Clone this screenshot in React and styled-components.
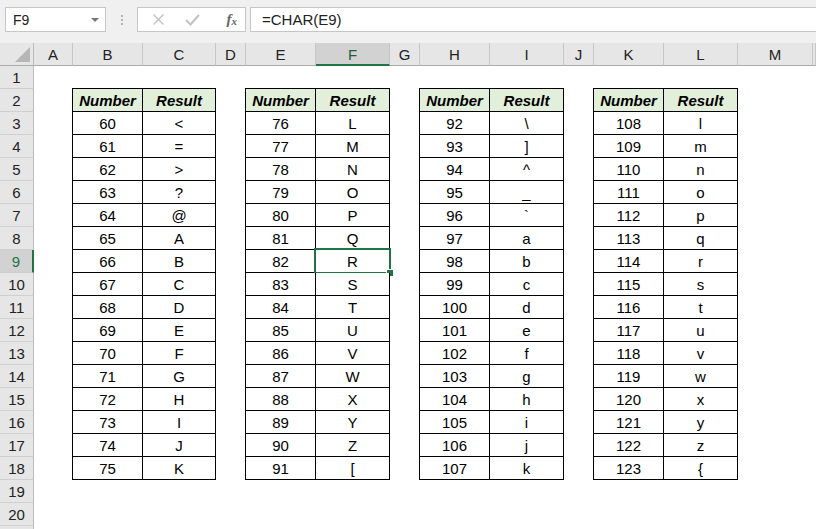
import React from 'react'
import styled, { createGlobalStyle } from 'styled-components'

const GlobalStyle = createGlobalStyle`
  html, body { margin: 0; padding: 0; background: #fff; }
  body { font-family: "Liberation Sans", Arial, sans-serif; overflow: hidden; }
`

const GREEN = '#217346'
const COLS = ['A', 'B', 'C', 'D', 'E', 'F', 'G', 'H', 'I', 'J', 'K', 'L', 'M', '']
const STARTS = [60, 76, 92, 108]
const ROWS = 20

const App = () => {
  return (
    <Page>
      <GlobalStyle />
      <FormulaBar>
        <NameBox>
          <span>F9</span>
          <Caret />
        </NameBox>
        <Dots>
          <i /><i /><i />
        </Dots>
        <FxBox>
          <ToolGlyph>
            <svg width="13" height="13" viewBox="0 0 13 13">
              <path d="M1.5 1.5 L11.5 11.5 M11.5 1.5 L1.5 11.5" stroke="#c2c2c2" strokeWidth="1.4" fill="none" />
            </svg>
          </ToolGlyph>
          <ToolGlyph>
            <svg width="15" height="13" viewBox="0 0 15 13">
              <path d="M1 7 L5.5 11.5 L14 2" stroke="#c2c2c2" strokeWidth="2" fill="none" />
            </svg>
          </ToolGlyph>
          <Fx>f<sub>x</sub></Fx>
        </FxBox>
        <FormulaInput>=CHAR(E9)</FormulaInput>
      </FormulaBar>

      <Sheet>
        <Corner />
        {COLS.map((c, i) => (
          <ColHead key={'c' + i} $selected={c === 'F'}>{c}</ColHead>
        ))}

        {Array.from({ length: ROWS }, (_, i) => (
          <RowHead key={'r' + i} $row={i + 2} $selected={i + 1 === 9}>{i + 1}</RowHead>
        ))}
        <RowHead $row={ROWS + 2} />

        {STARTS.map((start, t) => {
          const col = 3 + t * 3
          return (
            <React.Fragment key={'t' + t}>
              <Cell $col={col} $row={3} $head $first>Number</Cell>
              <Cell $col={col + 1} $row={3} $head>Result</Cell>
              {Array.from({ length: 16 }, (_, k) => {
                const n = start + k
                const selected = t === 1 && k === 6
                return (
                  <React.Fragment key={n}>
                    <Cell $col={col} $row={4 + k} $first>{n}</Cell>
                    <Cell $col={col + 1} $row={4 + k}>
                      {String.fromCharCode(n)}
                      {selected && (
                        <Selection>
                          <Handle />
                        </Selection>
                      )}
                    </Cell>
                  </React.Fragment>
                )
              })}
            </React.Fragment>
          )
        })}
      </Sheet>
    </Page>
  )
}

export default App

const Page = styled.div`
  width: 816px;
  height: 529px;
  overflow: hidden;
  background: #fff;
`

const FormulaBar = styled.div`
  height: 43px;
  box-sizing: border-box;
  padding: 7px 0 0 5px;
  display: flex;
  align-items: flex-start;
  background: #f0f0f0;
`

const NameBox = styled.div`
  width: 101px;
  height: 25px;
  box-sizing: border-box;
  border: 1px solid #c6c6c6;
  background: #fff;
  display: flex;
  align-items: center;
  justify-content: space-between;
  padding: 0 6px 0 7px;
  font-size: 14px;
  color: #222;
`

const Caret = styled.span`
  width: 0;
  height: 0;
  border-left: 4px solid transparent;
  border-right: 4px solid transparent;
  border-top: 4px solid #777;
`

const Dots = styled.div`
  width: 31px;
  height: 25px;
  display: flex;
  flex-direction: column;
  align-items: center;
  justify-content: center;
  gap: 2px;

  i {
    width: 2px;
    height: 2px;
    background: #b4b4b4;
  }
`

const FxBox = styled.div`
  width: 109px;
  height: 25px;
  box-sizing: border-box;
  border: 1px solid #c6c6c6;
  background: #fff;
  display: flex;
  align-items: center;
  padding: 0 8px 0 14px;
  gap: 18px;
`

const ToolGlyph = styled.span`
  display: flex;
  align-items: center;
  width: 15px;
`

const Fx = styled.span`
  margin-left: auto;
  font-family: "Liberation Serif", "Times New Roman", serif;
  font-style: italic;
  font-weight: bold;
  font-size: 15px;
  color: #666;

  sub {
    font-size: 11px;
    vertical-align: -1px;
  }
`

const FormulaInput = styled.div`
  flex: 1;
  height: 25px;
  margin-left: 4px;
  box-sizing: border-box;
  border: 1px solid #c6c6c6;
  border-right: none;
  background: #fff;
  display: flex;
  align-items: center;
  padding-left: 11px;
  font-size: 15px;
  color: #222;
`

const Sheet = styled.div`
  display: grid;
  grid-template-columns: 34px 39px 70px 73px 30px 70px 74px 30px 70px 74px 30px 70px 74px 75px 1fr;
  grid-auto-rows: 23px;
  font-size: 15px;
  color: #000;
`

const Corner = styled.div`
  grid-column: 1;
  grid-row: 1;
  position: relative;
  background: #e6e6e6;
  border-right: 1px solid #bdbdbd;
  border-bottom: 1px solid #ababab;
  box-sizing: border-box;

  &::after {
    content: '';
    position: absolute;
    right: 3px;
    bottom: 3px;
    width: 0;
    height: 0;
    border-left: 15px solid transparent;
    border-bottom: 15px solid #b6b6b6;
  }
`

const ColHead = styled.div`
  grid-row: 1;
  box-sizing: border-box;
  background: ${p => (p.$selected ? '#d2d2d2' : '#e6e6e6')};
  border-right: 1px solid #c6c6c6;
  border-bottom: ${p => (p.$selected ? `2px solid ${GREEN}` : '1px solid #ababab')};
  display: flex;
  align-items: center;
  justify-content: center;
  font-size: 15px;
  color: ${p => (p.$selected ? '#1e5e3a' : '#222')};
  padding-top: ${p => (p.$selected ? '1px' : '0')};
`

const RowHead = styled.div`
  grid-column: 1;
  grid-row: ${p => p.$row};
  box-sizing: border-box;
  background: ${p => (p.$selected ? '#d2d2d2' : '#e6e6e6')};
  border-right: ${p => (p.$selected ? `2px solid ${GREEN}` : '1px solid #bdbdbd')};
  border-bottom: 1px solid #d0d0d0;
  display: flex;
  align-items: center;
  justify-content: center;
  font-size: 15px;
  color: ${p => (p.$selected ? GREEN : '#222')};
`

const Cell = styled.div`
  grid-column: ${p => p.$col};
  grid-row: ${p => p.$row};
  position: relative;
  box-sizing: border-box;
  border-right: 1px solid #000;
  border-bottom: 1px solid #000;
  background: ${p => (p.$head ? '#e2efda' : '#fff')};
  display: flex;
  align-items: center;
  justify-content: center;
  font-weight: ${p => (p.$head ? 'bold' : 'normal')};
  font-style: ${p => (p.$head ? 'italic' : 'normal')};
  box-shadow: ${p =>
    p.$head && p.$first
      ? '-1px 0 0 #000, 0 -1px 0 #000, -1px -1px 0 #000'
      : p.$head
      ? '0 -1px 0 #000'
      : p.$first
      ? '-1px 0 0 #000'
      : 'none'};
`

const Selection = styled.div`
  position: absolute;
  top: -2px;
  left: -2px;
  right: -2px;
  bottom: -2px;
  border: 2px solid ${GREEN};
  pointer-events: none;
`

const Handle = styled.div`
  position: absolute;
  right: -5px;
  bottom: -5px;
  width: 6px;
  height: 6px;
  background: ${GREEN};
  border: 1px solid #fff;
`
